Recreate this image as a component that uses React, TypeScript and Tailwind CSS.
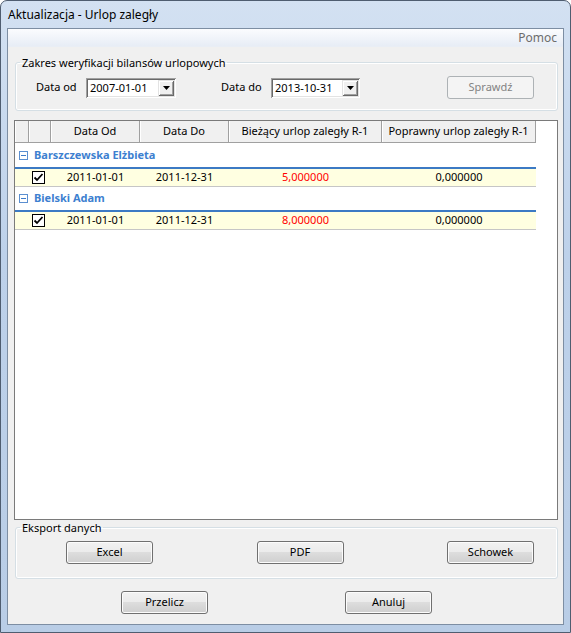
import React from "react";

function Btn({ label, disabled }: { label: string; disabled?: boolean }) {
  return (
    <div
      className={
        disabled
          ? "flex h-[23px] w-[87px] shrink-0 items-center justify-center rounded-[3px] border border-[#adb2b5] bg-[#f4f4f4] text-[11px] text-[#838383]"
          : "flex h-[23px] w-[87px] shrink-0 items-center justify-center rounded-[3px] border border-[#707070] bg-[linear-gradient(#f2f2f2_0%,#ebebeb_50%,#dddddd_50%,#cfcfcf_100%)] text-[11px] text-black shadow-[inset_0_0_0_1px_#fcfcfc]"
      }
    >
      {label}
    </div>
  );
}

function Combo({ value, wide }: { value: string; wide?: boolean }) {
  return (
    <div
      className={
        (wide ? "w-[90px] " : "w-[89px] ") +
        "flex h-[20px] shrink-0 items-center bg-white p-[2px] shadow-[inset_1px_1px_0_#a0a0a0,inset_-1px_-1px_0_#ffffff,inset_2px_2px_0_#696969,inset_-2px_-2px_0_#e3e3e3]"
      }
    >
      <span className="flex-1 pl-[2px] text-[11px] leading-[16px] text-black">{value}</span>
      <div className="flex h-[16px] w-[16px] items-center justify-center bg-[#f0f0f0] shadow-[inset_1px_1px_0_#e3e3e3,inset_-1px_-1px_0_#696969,inset_2px_2px_0_#ffffff,inset_-2px_-2px_0_#a0a0a0]">
        <svg width="7" height="4" viewBox="0 0 7 4">
          <polygon points="0,0 7,0 3.5,4" fill="#000" />
        </svg>
      </div>
    </div>
  );
}

function Check() {
  return (
    <div className="flex h-[13px] w-[13px] items-center justify-center border border-black bg-white">
      <svg width="11" height="11" viewBox="0 0 11 11">
        <polyline points="1.5,5.5 4,8 9.5,2" fill="none" stroke="#000" strokeWidth="1.8" />
      </svg>
    </div>
  );
}

function GroupRow({ name }: { name: string }) {
  return (
    <>
      <div className="flex h-[23px] w-[521px] items-center pl-[4px]">
        <div className="flex h-[9px] w-[9px] items-center justify-center border border-[#5b8fd0] bg-white">
          <div className="h-[1px] w-[5px] bg-[#3d7bc9]" />
        </div>
        <span className="ml-[6px] text-[11px] font-bold text-[#3d7fd0]">{name}</span>
      </div>
      <div className="h-[2px] w-[521px] bg-[#3c7ac4]" />
      <div className="flex h-[18px] w-[521px] items-center border-b border-[#c6c6c6] bg-[#ffffe1] text-[11px]">
        <div className="w-[14px]" />
        <div className="flex w-[22px] items-center pl-[3px]">
          <Check />
        </div>
        <div className="w-[89px] text-center text-black">2011-01-01</div>
        <div className="w-[89px] text-center text-black">2011-12-31</div>
        <div className="w-[153px] text-center text-[#ff0000]">{name.startsWith("Bar") ? "5,000000" : "8,000000"}</div>
        <div className="w-[154px] text-center text-black">0,000000</div>
      </div>
    </>
  );
}

export default function App() {
  const head =
    "flex h-[22px] shrink-0 items-center justify-center border-r border-b border-[#a0a0a0] bg-[#f0f0f0] text-[11px] text-black shadow-[inset_1px_0_0_#ffffff]";
  return (
    <div className="flex h-[633px] w-[571px] flex-col rounded-t-[7px] border border-[#4f5d70] bg-[linear-gradient(#d3e1f2,#bdd1ea_40%,#b9cde6)] px-[6px] pb-[7px] font-['Noto_Sans','Open_Sans',sans-serif]">
      <div className="flex h-[27px] shrink-0 items-center pl-[1px] text-[12px] text-black">
        Aktualizacja - Urlop zaległy
      </div>
      <div className="flex flex-1 flex-col border border-[#7d8ea3] bg-[#f0f0f0]">
        <div className="flex h-[18px] shrink-0 items-center justify-end bg-[linear-gradient(#fbfcfe,#e6ecf5)] pr-[6px] text-[12px] text-[#6d6d6d] shadow-[inset_0_-1px_0_#e9eef5]">
          Pomoc
        </div>

        <fieldset className="mt-[8px] ml-[7px] mr-[5px] rounded-[3px] border border-[#d5dfe5] pb-[11px] shadow-[inset_0_0_0_1px_#ffffff]">
          <legend className="ml-[4px] px-[2px] text-[11px] leading-[15px] text-black">
            Zakres weryfikacji bilansów urlopowych
          </legend>
          <div className="mt-[6px] flex h-[23px] items-center pl-[20px] pr-[23px] text-[11px] text-black">
            <span className="w-[50px] shrink-0">Data od</span>
            <Combo value="2007-01-01" wide />
            <span className="ml-[45px] w-[50px] shrink-0">Data do</span>
            <Combo value="2013-10-31" />
            <div className="ml-auto">
              <Btn label="Sprawdź" disabled />
            </div>
          </div>
        </fieldset>

        <div className="mt-[9px] ml-[6px] mr-[5px] h-[400px] shrink-0 border border-[#7a7a7a] bg-white">
          <div className="flex w-[521px]">
            <div className={head + " w-[14px]"} />
            <div className={head + " w-[22px]"} />
            <div className={head + " w-[89px]"}>Data Od</div>
            <div className={head + " w-[89px]"}>Data Do</div>
            <div className={head + " w-[153px]"}>Bieżący urlop zaległy R-1</div>
            <div className={head + " w-[154px]"}>Poprawny urlop zaległy R-1</div>
          </div>
          <div className="h-[1px]" />
          <GroupRow name="Barszczewska Elżbieta" />
          <GroupRow name="Bielski Adam" />
        </div>

        <fieldset className="ml-[7px] mr-[5px] rounded-[3px] border border-[#d5dfe5] pb-[14px] shadow-[inset_0_0_0_1px_#ffffff]">
          <legend className="ml-[4px] px-[2px] text-[11px] leading-[15px] text-black">Eksport danych</legend>
          <div className="mt-[6px] flex justify-between pl-[50px] pr-[23px]">
            <Btn label="Excel" />
            <Btn label="PDF" />
            <Btn label="Schowek" />
          </div>
        </fieldset>

        <div className="mt-[12px] ml-[113px] flex gap-[137px]">
          <Btn label="Przelicz" />
          <Btn label="Anuluj" />
        </div>
      </div>
    </div>
  );
}
